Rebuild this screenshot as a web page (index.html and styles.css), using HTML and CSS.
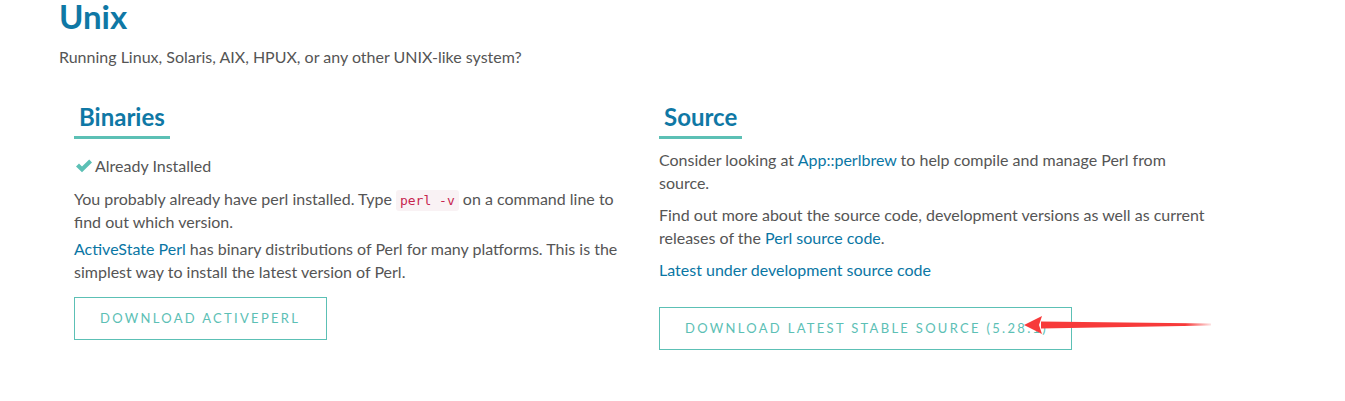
FILE: index.html
```html
<!DOCTYPE html>
<html>
<head>
<meta charset="utf-8">
<link rel="stylesheet" href="styles.css">
</head>
<body>
<div class="page">
  <h1 class="title">Unix</h1>
  <p class="lead">Running Linux, Solaris, AIX, HPUX, or any other UNIX-like system?</p>
  <div class="row">
    <div class="col">
      <h2 class="sub">Binaries</h2>
      <p class="installed"><svg class="check" width="18" height="14" viewBox="0 0 18 14"><path d="M1 7.5 L4 4.6 L7 7.6 L14.2 0.6 L17 3.4 L7 13.2 Z" fill="#5cc0b5"/></svg>Already Installed</p>
      <p class="txt">You probably already have perl installed. Type <code>perl -v</code> on a command line to find out which version.</p>
      <p class="txt t2"><a href="#">ActiveState Perl</a> has binary distributions of Perl for many platforms. This is the simplest way to install the latest version of Perl.</p>
      <a class="btn b1" href="#">DOWNLOAD ACTIVEPERL</a>
    </div>
    <div class="col">
      <h2 class="sub">Source</h2>
      <p class="txt s1">Consider looking at <a href="#">App::perlbrew</a> to help compile and manage Perl from source.</p>
      <p class="txt s2">Find out more about the source code, development versions as well as current releases of the <a href="#">Perl source code</a>.</p>
      <p class="txt s3"><a href="#">Latest under development source code</a></p>
      <a class="btn b2" href="#">DOWNLOAD LATEST STABLE SOURCE (5.28.1)</a>
    </div>
  </div>
</div>
<svg class="arrow" width="200" height="24" viewBox="0 0 200 24">
  <defs>
    <linearGradient id="g" x1="0" x2="1" y1="0" y2="0">
      <stop offset="0" stop-color="#f73a3a"/>
      <stop offset="0.85" stop-color="#f73a3a"/>
      <stop offset="1" stop-color="#f73a3a" stop-opacity="0.15"/>
    </linearGradient>
  </defs>
  <path d="M18 8.5 L188 10.5 L188 12.5 L18 15.5 Z" fill="url(#g)"/>
  <path d="M1 12 L19 3 L16 12 L19 21 Z" fill="#f73a3a"/>
</svg>
</body>
</html>
```

FILE: styles.css
```css
html, body {
  margin: 0;
  padding: 0;
  background: #fff;
}
body {
  font-family: Lato, "Open Sans", sans-serif;
  color: #555;
  font-size: 16px;
  line-height: 23px;
}
.page {
  padding-left: 59px;
  width: 1170px;
}
.title {
  margin: 0;
  font-size: 33px;
  line-height: 30px;
  font-weight: 700;
  color: #0f78a5;
  padding-top: 1px;
}
.lead {
  margin: 14px 0 0 0;
}
.row {
  display: flex;
  margin-top: 34px;
}
.col {
  width: 552px;
  padding: 0 15px;
}
.col + .col {
  padding-left: 18px;
}
.sub {
  display: inline-block;
  margin: 0;
  padding: 0 5px 4px;
  font-size: 24px;
  line-height: 30px;
  font-weight: 700;
  color: #0f78a5;
  border-bottom: 3px solid #5cc0b5;
}
.installed {
  margin: 15px 0 0 0;
  display: flex;
  align-items: center;
}
.check {
  margin: 0 2px 0 1px;
}
.txt {
  margin: 0;
}
.installed + .txt {
  margin-top: 10px;
}
.t2 {
  margin-top: 4px;
}
.s1 { margin-top: 9px; }
.s2 { margin-top: 9px; }
.s3 { margin-top: 9px; }
a {
  color: #0a76a4;
  text-decoration: none;
}
code {
  font-family: "DejaVu Sans Mono", monospace;
  font-size: 13px;
  line-height: 1;
  color: #c7254e;
  background: #f9f2f4;
  padding: 3px 4px;
  border-radius: 3px;
}
.btn {
  display: inline-block;
  border: 1px solid #5cc0b5;
  color: #5cc0b5;
  font-size: 13px;
  letter-spacing: 2.3px;
  line-height: 41px;
  padding: 0 23px 0 25px;
  text-decoration: none;
}
.b1 {
  margin-top: 14px;
  padding-right: 26px;
}
.b2 { margin-top: 26px; }
.arrow {
  position: absolute;
  left: 1023px;
  top: 313px;
}
```
